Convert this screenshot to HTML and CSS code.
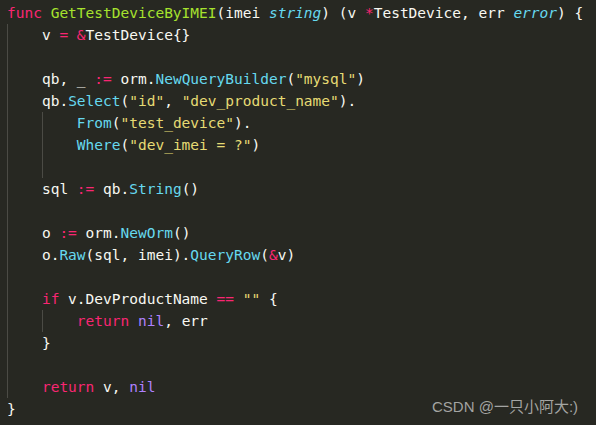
FILE: index.html
```html
<!DOCTYPE html>
<html>
<head>
<meta charset="utf-8">
<link rel="stylesheet" href="styles.css">
</head>
<body>
<div class="code">
<div class="ln"><span class="k">func</span> <span class="fn">GetTestDeviceByIMEI</span>(imei <span class="t">string</span>) (v <span class="k">*</span>TestDevice, err <span class="t">error</span>) {</div>
<div class="ln"><span class="g">    </span>v <span class="k">=</span> <span class="k">&amp;</span>TestDevice{}</div>
<div class="ln"><span class="g">    </span></div>
<div class="ln"><span class="g">    </span>qb, _ <span class="k">:=</span> orm.<span class="m">NewQueryBuilder</span>(<span class="s">"mysql"</span>)</div>
<div class="ln"><span class="g">    </span>qb.<span class="m">Select</span>(<span class="s">"id"</span>, <span class="s">"dev_product_name"</span>).</div>
<div class="ln"><span class="g">    </span><span class="g">    </span><span class="m">From</span>(<span class="s">"test_device"</span>).</div>
<div class="ln"><span class="g">    </span><span class="g">    </span><span class="m">Where</span>(<span class="s">"dev_imei = ?"</span>)</div>
<div class="ln"><span class="g">    </span><span class="g">    </span></div>
<div class="ln"><span class="g">    </span>sql <span class="k">:=</span> qb.<span class="m">String</span>()</div>
<div class="ln"><span class="g">    </span></div>
<div class="ln"><span class="g">    </span>o <span class="k">:=</span> orm.<span class="m">NewOrm</span>()</div>
<div class="ln"><span class="g">    </span>o.<span class="m">Raw</span>(sql, imei).<span class="m">QueryRow</span>(<span class="k">&amp;</span>v)</div>
<div class="ln"><span class="g">    </span></div>
<div class="ln"><span class="g">    </span><span class="k">if</span> v.DevProductName <span class="k">==</span> <span class="s">""</span> {</div>
<div class="ln"><span class="g">    </span><span class="g">    </span><span class="k">return</span> <span class="c">nil</span>, err</div>
<div class="ln"><span class="g">    </span>}</div>
<div class="ln"><span class="g">    </span></div>
<div class="ln"><span class="g">    </span><span class="k">return</span> v, <span class="c">nil</span></div>
<div class="ln">}</div>
</div>
<div class="wm">CSDN @一只小阿大:)</div>
</body>
</html>
```
FILE: styles.css
```css
html, body {
  margin: 0;
  padding: 0;
  background: #272822;
  width: 596px;
  height: 425px;
  overflow: hidden;
}
body {
  position: relative;
}
.code {
  padding: 2px 0 0 7px;
  font-family: "DejaVu Sans Mono", monospace;
  font-size: 14.5px;
  color: #f8f8f2;
}
.ln {
  height: 22px;
  line-height: 22px;
  white-space: pre;
}
.g {
  display: inline-block;
  height: 22px;
  vertical-align: top;
  box-shadow: inset 1px 0 0 #4b4b45;
}
.k { color: #f92672; }
.fn { color: #a6e22e; }
.t { color: #66d9ef; font-style: italic; }
.m { color: #66d9ef; }
.s { color: #e6db74; }
.c { color: #ae81ff; }
.wm {
  position: absolute;
  left: 432px;
  top: 397px;
  font-family: "Liberation Sans", "Noto Sans CJK SC", sans-serif;
  font-size: 15px;
  line-height: 20px;
  color: rgba(200, 200, 200, 0.78);
}
```
